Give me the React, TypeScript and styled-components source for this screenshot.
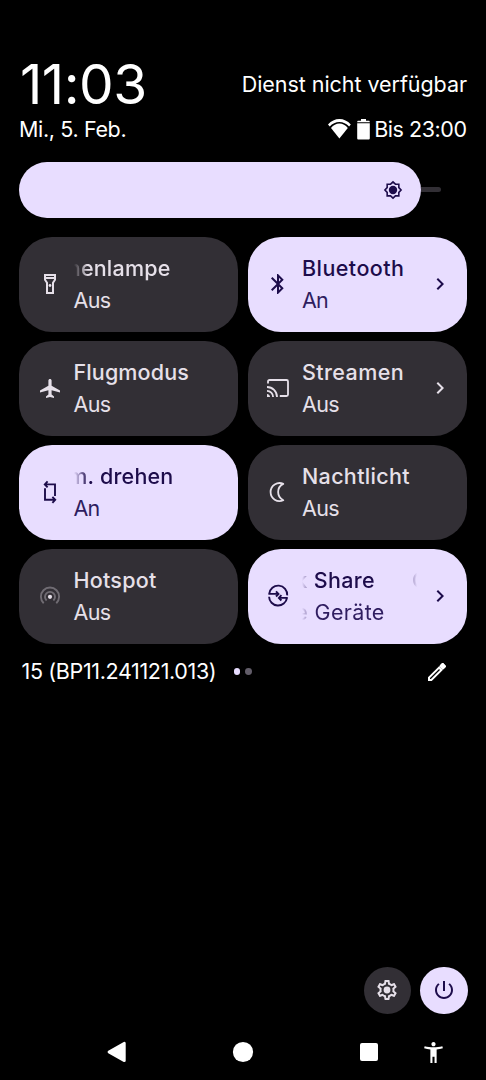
import React from 'react';
import styled, { createGlobalStyle, css } from 'styled-components';

const color = {
  accent: '#e8ddff',
  onAccent: '#1d0c4b',
  onAccentSoft: '#2f1d60',
  surface: '#322f35',
  onSurface: '#e6e0e9',
  white: '#ffffff',
};

const GlobalStyle = createGlobalStyle`
  * { box-sizing: border-box; }
  html, body { margin: 0; background: #000; }
`;

const Screen = styled.div`
  display: flex;
  flex-direction: column;
  width: 486px;
  height: 1080px;
  padding-top: 64px;
  overflow: hidden;
  background: #000;
  color: ${color.white};
  font-family: Inter, 'Liberation Sans', sans-serif;
  font-size: 21.5px;
  white-space: nowrap;
`;

const ClockRow = styled.header`
  display: flex;
  align-items: center;
  justify-content: space-between;
  height: 40px;
  padding: 0 19px 0 20px;
`;

const Clock = styled.div`
  font-size: 55px;
  line-height: 40px;
  letter-spacing: -0.5px;
`;

const Carrier = styled.div`
  line-height: 30px;
  letter-spacing: -0.05px;
`;

const StatusRow = styled.div`
  display: flex;
  align-items: center;
  justify-content: space-between;
  height: 30px;
  margin-top: 10px;
  padding: 0 19.5px 0 19px;
`;

const DateText = styled.div`
  letter-spacing: -0.36px;
`;

const StatusIcons = styled.div`
  display: flex;
  align-items: center;
`;

const WifiIcon = styled.svg`
  width: 23px;
  height: 20px;
  margin-right: 6.5px;
`;

const BatteryIcon = styled.svg`
  width: 13px;
  height: 21px;
  margin-right: 4px;
`;

const BatteryText = styled.span`
  letter-spacing: -0.45px;
`;

const BrightnessSlider = styled.div`
  display: flex;
  align-items: center;
  height: 56.5px;
  margin: 17.5px 45px 0 19px;
`;

const SliderFill = styled.div`
  display: flex;
  align-items: center;
  justify-content: flex-end;
  width: 402px;
  height: 100%;
  padding-right: 18px;
  border-radius: 28.25px;
  background: ${color.accent};
`;

const SliderTrack = styled.div`
  flex: 1;
  height: 5px;
  border-radius: 0 2.5px 2.5px 0;
  background: ${color.surface};
`;

const BrightnessIcon = styled.svg`
  width: 20px;
  height: 20px;
`;

const TileGrid = styled.main`
  display: grid;
  grid-template-columns: 219px 219px;
  grid-auto-rows: 94.5px;
  gap: 9.5px;
  margin: 19px 0 0 19px;
`;

const Tile = styled.button<{ $active?: boolean }>`
  display: flex;
  align-items: center;
  padding: 0 14.5px 0 18.5px;
  border: 0;
  border-radius: 33px;
  font: inherit;
  text-align: left;
  background: ${(p) => (p.$active ? color.accent : color.surface)};
  color: ${(p) => (p.$active ? color.onAccent : color.onSurface)};
`;

const Icon = styled.svg`
  flex: none;
  width: 24px;
  height: 24px;
`;

const TileText = styled.div`
  flex: 1;
  min-width: 0;
  margin: 0 11.5px 0 12px;
  line-height: 32px;
`;

const fadeLeft = css`
  mask-image: linear-gradient(to right, transparent 0, #000 14px);
`;

const fadeBoth = css`
  mask-image: linear-gradient(to right, transparent 0, #000 14px, #000 calc(100% - 14px), transparent 100%);
`;

const Label = styled.div<{ $track: number; $fade?: 'left' | 'both' }>`
  display: flex;
  font-weight: 500;
  letter-spacing: ${(p) => p.$track}px;
  ${(p) => p.$fade && 'overflow: hidden;'}
  ${(p) => p.$fade === 'left' && fadeLeft}
  ${(p) => p.$fade === 'both' && fadeBoth}
`;

const State = styled.div<{ $active?: boolean; $track: number; $fade?: boolean }>`
  display: flex;
  letter-spacing: ${(p) => p.$track}px;
  color: ${(p) => (p.$active ? color.onAccentSoft : 'inherit')};
  ${(p) => p.$fade && 'overflow: hidden;'}
  ${(p) => p.$fade && fadeBoth}
`;

/* Scrolled marquee text: its end sits at $end, the start runs out to the left. */
const Scrolled = styled.span<{ $end: number }>`
  display: flex;
  flex: none;
  justify-content: flex-end;
  width: ${(p) => p.$end}px;
`;

const Repeat = styled.span`
  flex: none;
  margin-left: 37px;
`;

const PageFooter = styled.div`
  display: grid;
  grid-template-columns: 212px auto 1fr;
  align-items: center;
  height: 56px;
  padding: 0 37.5px 0 21.5px;
`;

const Build = styled.span`
  line-height: 30px;
  padding-bottom: 1px;
  letter-spacing: -0.35px;
`;

const Dots = styled.div`
  display: flex;
  gap: 4.7px;
`;

const Dot = styled.i<{ $on?: boolean }>`
  width: 6.8px;
  height: 6.8px;
  border-radius: 50%;
  background: ${(p) => (p.$on ? color.accent : '#625d69')};
`;

const EditIcon = styled(Icon)`
  justify-self: end;
`;

const Actions = styled.div`
  display: flex;
  justify-content: flex-end;
  gap: 9.5px;
  margin-top: auto;
  padding-right: 18.5px;
`;

const RoundButton = styled.button<{ $active?: boolean }>`
  display: flex;
  align-items: center;
  justify-content: center;
  width: 47.2px;
  height: 47.2px;
  padding: 0;
  border: 0;
  border-radius: 50%;
  background: ${(p) => (p.$active ? color.accent : color.surface)};
  color: ${(p) => (p.$active ? color.onAccent : color.onSurface)};
`;

const NavBar = styled.nav`
  display: grid;
  grid-template-columns: 126px 126px 126px 1fr;
  align-items: center;
  justify-items: center;
  height: 56px;
  margin-top: 10.3px;
  padding: 0 40.5px 0 53.5px;
`;

const NavAccess = styled(Icon)`
  width: 25px;
  height: 25px;
  justify-self: start;
  margin-left: -11px;
`;

function Glyph({ d, children }: { d?: string; children?: React.ReactNode }) {
  return (
    <Icon viewBox="0 0 24 24" fill="currentColor">
      {d && <path d={d} />}
      {children}
    </Icon>
  );
}

const Chevron = () => <Glyph d="M8.59 16.59L13.17 12 8.59 7.41 10 6l6 6-6 6z" />;

const paths = {
  flashlight:
    'M18 2H6v6l2 3v11h8V11l2-3V2zm-2 2v1H8V4h8zm-2 6.4V20h-4v-9.6L8 7.39V7h8v.39l-2 3.01z',
  airplane:
    'M22 16.4v-2l-8.4-4.6V4.6c0-.9-.7-1.6-1.6-1.6s-1.6.7-1.6 1.6v5.2L2 14.4v2l8.4-2.2v4.4L8 20.5V22l4-.9 4 .9v-1.5l-2.4-1.9v-4.4l8.4 2.2z',
  bluetooth:
    'M17.71 7.71L12 2h-1v7.59L6.41 5 5 6.41 10.59 12 5 17.59 6.41 19 11 14.41V22h1l5.71-5.71-4.3-4.29 4.3-4.29zM13 5.83l1.88 1.88L13 9.59V5.83zm1.88 10.46L13 18.17v-3.76l1.88 1.88z',
  pencil:
    'M14.06 9.02l.92.92L5.92 19H5v-.92l9.06-9.06M17.66 3c-.25 0-.51.1-.7.29l-1.83 1.83 3.75 3.75 1.83-1.83c.39-.39.39-1.02 0-1.41l-2.34-2.34c-.2-.2-.45-.29-.71-.29zm-3.6 3.19L3 17.25V21h3.75L17.81 9.94l-3.75-3.75z',
  pencilTip: 'M17.66 3c-.25 0-.51.1-.7.29l-2.9 2.9 3.75 3.75 2.9-2.9c.39-.39.39-1.02 0-1.41l-2.34-2.34c-.2-.2-.45-.29-.71-.29z',
  power:
    'M13 3h-2v10h2V3zm4.83 2.17l-1.42 1.42C17.99 7.86 19 9.81 19 12c0 3.87-3.13 7-7 7s-7-3.13-7-7c0-2.19 1.01-4.14 2.58-5.42L6.17 5.17C4.23 6.82 3 9.26 3 12c0 4.97 4.03 9 9 9s9-4.03 9-9c0-2.74-1.23-5.18-3.17-6.83z',
  settings:
    'M19.43 12.98c.04-.32.07-.64.07-.98 0-.34-.03-.66-.07-.98l2.11-1.65c.19-.15.24-.42.12-.64l-2-3.46c-.09-.16-.26-.25-.44-.25-.06 0-.12.01-.17.03l-2.49 1c-.52-.4-1.08-.73-1.69-.98l-.38-2.65C14.46 2.18 14.25 2 14 2h-4c-.25 0-.46.18-.49.42l-.38 2.65c-.61.25-1.17.59-1.69.98l-2.49-1c-.06-.02-.12-.03-.18-.03-.17 0-.34.09-.43.25l-2 3.46c-.13.22-.07.49.12.64l2.11 1.65c-.04.32-.07.65-.07.98 0 .33.03.66.07.98l-2.11 1.65c-.19.15-.24.42-.12.64l2 3.46c.09.16.26.25.44.25.06 0 .12-.01.17-.03l2.49-1c.52.4 1.08.73 1.69.98l.38 2.65c.03.24.24.42.49.42h4c.25 0 .46-.18.49-.42l.38-2.65c.61-.25 1.17-.59 1.69-.98l2.49 1c.06.02.12.03.18.03.17 0 .34-.09.43-.25l2-3.46c.12-.22.07-.49-.12-.64l-2.11-1.65zm-1.98-1.71c.04.31.05.52.05.73 0 .21-.02.43-.05.73l-.14 1.13.89.7 1.08.84-.7 1.21-1.27-.51-1.04-.42-.9.68c-.43.32-.84.56-1.25.73l-1.06.43-.16 1.13-.2 1.35h-1.4l-.19-1.35-.16-1.13-1.06-.43c-.43-.18-.83-.41-1.23-.71l-.91-.7-1.06.43-1.27.51-.7-1.21 1.08-.84.89-.7-.14-1.13c-.03-.31-.05-.54-.05-.74s.02-.43.05-.73l.14-1.13-.89-.7-1.08-.84.7-1.21 1.27.51 1.04.42.9-.68c.43-.32.84-.56 1.25-.73l1.06-.43.16-1.13.2-1.35h1.39l.19 1.35.16 1.13 1.06.43c.43.18.83.41 1.23.71l.91.7 1.06-.43 1.27-.51.7 1.21-1.07.85-.89.7.14 1.13z',
  access:
    'M20.5 6c-2.61.7-5.67 1-8.5 1s-5.89-.3-8.5-1L3 8c1.86.5 4 .83 6 1v13h2v-6h2v6h2V9c2-.17 4.14-.5 6-1l-.5-2zM12 6c1.1 0 2-.9 2-2s-.9-2-2-2-2 .9-2 2 .9 2 2 2z',
};

const line = { fill: 'none', stroke: 'currentColor' };

export default function App() {
  return (
    <Screen>
      <GlobalStyle />
      <ClockRow>
        <Clock>11:03</Clock>
        <Carrier>Dienst nicht verfügbar</Carrier>
      </ClockRow>
      <StatusRow>
        <DateText>Mi., 5. Feb.</DateText>
        <StatusIcons>
          <WifiIcon viewBox="0 0 23 20" fill="#fff">
            <path d="M0 5.4C3.2 1.9 7.2 0 11.4 0s8.2 1.9 11.4 5.4l-1.7 2.1C18.4 4.6 15.1 3 11.4 3S4.4 4.6 1.7 7.5z" />
            <path d="M3 9C5.2 6.2 8.2 4.5 11.4 4.5S17.6 6.2 19.8 9l-8.4 10.4z" />
          </WifiIcon>
          <BatteryIcon viewBox="0 0 13 21" fill="#fff">
            <path d="M4 0h5v1.8h2.5c.8 0 1.3.5 1.3 1.2v.3H.2V3c0-.7.5-1.2 1.3-1.2H4zM.2 4.2h12.6v15c0 .8-.5 1.3-1.3 1.3h-10c-.8 0-1.3-.5-1.3-1.3z" />
          </BatteryIcon>
          <BatteryText>Bis 23:00</BatteryText>
        </StatusIcons>
      </StatusRow>

      <BrightnessSlider>
        <SliderFill>
          <BrightnessIcon viewBox="0 0 24 24" color={color.onAccent}>
            <path
              d="M12 2.3l2.9 2.7H19v4.1l2.7 2.9-2.7 2.9V19h-4.1L12 21.7 9.1 19H5v-4.1L2.3 12 5 9.1V5h4.1z"
              strokeWidth="1.9"
              {...line}
            />
            <circle cx="12" cy="12" r="5" fill="currentColor" />
          </BrightnessIcon>
        </SliderFill>
        <SliderTrack />
      </BrightnessSlider>

      <TileGrid>
        <Tile>
          <Glyph d={paths.flashlight}>
            <circle cx="12" cy="13.5" r="1.4" />
          </Glyph>
          <TileText>
            <Label $track={0.2} $fade="left">
              <Scrolled $end={97}>Taschenlampe</Scrolled>
            </Label>
            <State $track={-0.6}>Aus</State>
          </TileText>
        </Tile>

        <Tile $active>
          <Glyph d={paths.bluetooth} />
          <TileText>
            <Label $track={0.44}>Bluetooth</Label>
            <State $active $track={-0.8}>An</State>
          </TileText>
          <Chevron />
        </Tile>

        <Tile>
          <Glyph d={paths.airplane} />
          <TileText>
            <Label $track={0.13}>Flugmodus</Label>
            <State $track={-0.6}>Aus</State>
          </TileText>
        </Tile>

        <Tile>
          <Glyph>
            <path d="M2 7.6V5.5C2 4.6 2.6 4 3.5 4h17c.9 0 1.5.6 1.5 1.5v13c0 .9-.6 1.5-1.5 1.5h-6.7" strokeWidth="1.8" {...line} />
            <path d="M1 18v3h3c0-1.66-1.34-3-3-3z" />
            <path d="M1 14.9A6.1 6.1 0 0 1 7.1 21M1 11A10 10 0 0 1 11 21" strokeWidth="1.8" {...line} />
          </Glyph>
          <TileText>
            <Label $track={0.4}>Streamen</Label>
            <State $track={-0.6}>Aus</State>
          </TileText>
          <Chevron />
        </Tile>

        <Tile $active>
          <Glyph>
            <path
              d="M17 16V4.4H7.3M9.6 1.4L6.8 4.4l2.8 2.9M7 8.2V19.8h9.7M14.4 16.9l2.8 2.9-2.8 3"
              strokeWidth="1.9"
              {...line}
            />
          </Glyph>
          <TileText>
            <Label $track={0.2} $fade="left">
              <Scrolled $end={100}>Autom. drehen</Scrolled>
            </Label>
            <State $active $track={-0.8}>An</State>
          </TileText>
        </Tile>

        <Tile>
          <Glyph>
            <path d="M17.3 3.9A9 9 0 1 0 17.3 20.3A9.1 9.1 0 0 1 17.3 3.9z" strokeWidth="1.8" strokeLinejoin="round" {...line} />
          </Glyph>
          <TileText>
            <Label $track={0.33}>Nachtlicht</Label>
            <State $track={-0.6}>Aus</State>
          </TileText>
        </Tile>

        <Tile>
          <Glyph>
            <path
              d="M5.7 19.2A9.1 9.1 0 1 1 18.3 19.2M8.6 16.5A5 5 0 1 1 15.4 16.5"
              strokeWidth="1.9"
              opacity="0.35"
              {...line}
            />
            <circle cx="12" cy="12.8" r="2.1" />
          </Glyph>
          <TileText>
            <Label $track={0.25}>Hotspot</Label>
            <State $track={-0.6}>Aus</State>
          </TileText>
        </Tile>

        <Tile $active>
          <Glyph>
            <path
              d="M10 7.3l2.5 2.6-2.5 2.6M15.4 11.2l-2.5 2.7 2.5 2.6"
              strokeWidth="1.9"
              {...line}
            />
            <path
              d="M11.8 9.9H3.2A9 9 0 0 1 21.2 11.4M3.1 12.7A9 9 0 0 0 21 13.9H13.6"
              strokeWidth="1.9"
              strokeLinejoin="round"
              {...line}
            />
          </Glyph>
          <TileText>
            <Label $track={0.35} $fade="both">
              <Scrolled $end={73}>Quick Share</Scrolled>
              <Repeat>Quick Share</Repeat>
            </Label>
            <State $active $track={0.35} $fade>
              <Scrolled $end={82.7}>Keine Geräte</Scrolled>
            </State>
          </TileText>
          <Chevron />
        </Tile>
      </TileGrid>

      <PageFooter>
        <Build>15 (BP11.241121.013)</Build>
        <Dots>
          <Dot $on />
          <Dot />
        </Dots>
        <EditIcon viewBox="0 0 24 24" fill="currentColor">
          <path d={paths.pencil} />
          <path d={paths.pencilTip} />
        </EditIcon>
      </PageFooter>

      <Actions>
        <RoundButton>
          <Glyph d={paths.settings}>
            <circle cx="12" cy="12" r="3.4" />
          </Glyph>
        </RoundButton>
        <RoundButton $active>
          <Glyph d={paths.power} />
        </RoundButton>
      </Actions>

      <NavBar>
        <Glyph>
          <path d="M3.9 12L19.4 3.2v17.6z" stroke="currentColor" strokeWidth="2.6" strokeLinejoin="round" />
        </Glyph>
        <Glyph>
          <circle cx="12" cy="12" r="10.1" />
        </Glyph>
        <Glyph>
          <rect x="3" y="3" width="18" height="18" rx="2" />
        </Glyph>
        <NavAccess viewBox="0 0 24 24" fill="currentColor">
          <path d={paths.access} />
        </NavAccess>
      </NavBar>
    </Screen>
  );
}
